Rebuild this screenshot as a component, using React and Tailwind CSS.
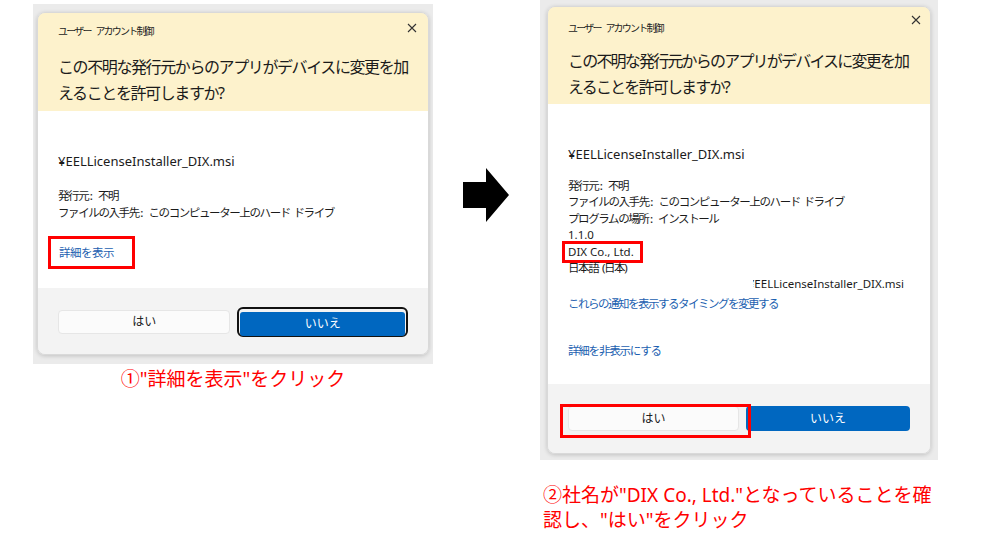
import React from "react";

const font = { fontFamily: '"Noto Sans", "Noto Sans CJK JP", sans-serif' };

const CloseIcon = () => (
  <svg width="10" height="10" viewBox="0 0 10 10" className="block">
    <path d="M1 1L9 9M9 1L1 9" stroke="#333" strokeWidth="1.1" />
  </svg>
);

// label: value line, colon kept at normal spacing so it doesn't collapse
const Kv = ({ k, v }) => (
  <div>
    <span className="mr-[1.5px]">{k}</span>
    <span className="tracking-normal font-medium">: </span>
    {v}
  </div>
);

const Header = ({ pad, titleMt, titleTrack, xPos }) => (
  <div className={`relative h-full bg-[#fdf2cc] px-[20px] ${pad}`}>
    <div className="text-[10px] leading-[12px] tracking-[-1.8px] [word-spacing:4px] text-[#222]">
      ユーザー アカウント制御
    </div>
    <div className={`absolute ${xPos}`}>
      <CloseIcon />
    </div>
    <div className={`${titleMt} ${titleTrack} text-[16px] leading-[26px] whitespace-nowrap text-[#1b1b1b]`}>
      この不明な発行元からのアプリがデバイスに変更を加
      <br />
      えることを許可しますか?
    </div>
  </div>
);

const App = () => {
  return (
    <div className="w-[1001px] h-[534px] bg-white flex items-start" style={font}>
      {/* Left - before */}
      <div className="ml-[33px] mt-[4px] w-[400px] flex flex-col items-center">
        <div className="w-full bg-[#ebebeb] pt-[8px] pb-[9px] px-[4px]">
          <div className="rounded-[8px] overflow-hidden shadow-[0_1px_4px_rgba(0,0,0,0.18)] border border-[#d9d9d9]">
            <div className="h-[98px] overflow-hidden">
              <Header pad="pt-[12px]" titleMt="mt-[17px]" titleTrack="tracking-[-1.4px]" xPos="right-[11px] top-[10px]" />
            </div>
            <div className="h-[177px] bg-white px-[20px] pt-[41px]">
              <div className="text-[13px] leading-[18px] text-[#1b1b1b]">
                ¥EELLicenseInstaller_DIX.msi
              </div>
              <div className="mt-[17px] text-[11.5px] leading-[17px] tracking-[-1.4px] [word-spacing:2px] text-[#1b1b1b]">
                <Kv k="発行元" v="不明" />
                <Kv k="ファイルの入手先" v="このコンピューター上のハード ドライブ" />
              </div>
              <div className="mt-[15px] -ml-[10px] w-[87px] h-[33px] border-[3px] border-[#ff0000] pl-[8px] flex items-center">
                <span className="text-[11.5px] tracking-[-0.5px] text-[#1c5fb0]">詳細を表示</span>
              </div>
            </div>
            <div className="h-[66px] bg-[#f3f3f3] px-[20px] pt-[19px] flex items-start gap-[7px]">
              <button className="mt-[3px] w-[173px] h-[24px] rounded-[4px] bg-[#fbfbfb] border border-[#e6e6e6] text-[12px] text-[#1b1b1b]">
                はい
              </button>
              <div className="w-[171px] h-[30px] rounded-[6px] border-2 border-[#111] p-[1px]">
                <button className="w-full h-full rounded-[3px] bg-[#0067c0] text-[12px] text-white">
                  いいえ
                </button>
              </div>
            </div>
          </div>
        </div>
        <p className="mt-[3px] text-[19px] leading-[24px] text-[#ff0000]">
          ①"詳細を表示"をクリック
        </p>
      </div>

      {/* Arrow */}
      <svg width="46" height="54" viewBox="0 0 46 54" className="ml-[30px] mt-[168px] shrink-0">
        <path d="M0 14H23V0L46 27L23 54V40H0Z" fill="#000" />
      </svg>

      {/* Right - after */}
      <div className="ml-[31px] w-[398px] flex flex-col">
        <div className="w-full bg-[#ebebeb] pt-[6px] pb-[6px] px-[7px]">
          <div className="rounded-[8px] overflow-hidden shadow-[0_1px_4px_rgba(0,0,0,0.18)] border border-[#d9d9d9]">
            <div className="h-[97px] overflow-hidden">
              <Header pad="pt-[15px]" titleMt="mt-[14px]" titleTrack="tracking-[-1.8px]" xPos="right-[9px] top-[8px]" />
            </div>
            <div className="h-[280px] bg-white px-[20px] pt-[41px]">
              <div className="text-[13px] leading-[18px] text-[#1b1b1b]">
                ¥EELLicenseInstaller_DIX.msi
              </div>
              <div className="mt-[15px] text-[11.5px] leading-[16.4px] tracking-[-1.4px] [word-spacing:2px] text-[#1b1b1b]">
                <Kv k="発行元" v="不明" />
                <Kv k="ファイルの入手先" v="このコンピューター上のハード ドライブ" />
                <Kv k="プログラムの場所" v="インストール" />
                <div className="tracking-normal [word-spacing:0px]">1.1.0</div>
                <div className="-ml-[6px] -my-[3px] w-[81px] border-[3px] border-[#ff0000] pl-[3px] tracking-normal [word-spacing:0px]">
                  DIX Co., Ltd.
                </div>
                <div>日本語 (日本)</div>
                <div className="ml-auto mr-[6px] w-[151px] flex justify-end overflow-hidden whitespace-nowrap tracking-normal [word-spacing:0px]">
                  <span>¥EELLicenseInstaller_DIX.msi</span>
                </div>
              </div>
              <div className="mt-[3px] text-[11.5px] leading-[16px] tracking-[-1.5px] text-[#1c5fb0]">
                これらの通知を表示するタイミングを変更する
              </div>
              <div className="mt-[31px] text-[11.5px] leading-[16px] tracking-[-1.2px] text-[#1c5fb0]">
                詳細を非表示にする
              </div>
            </div>
            <div className="relative h-[69px] bg-[#f3f3f3] px-[20px] pt-[22px] flex items-start gap-[7px]">
              <button className="w-[171px] h-[25px] rounded-[4px] bg-[#fbfbfb] border border-[#e6e6e6] text-[12px] text-[#1b1b1b]">
                はい
              </button>
              <button className="flex-1 h-[25px] rounded-[4px] bg-[#0067c0] text-[12px] text-white">
                いいえ
              </button>
              <div className="absolute left-[12px] top-[20px] w-[191px] h-[34px] border-[3px] border-[#ff0000]" />
            </div>
          </div>
        </div>
        <p className="mt-[23px] pl-[3px] text-[19px] leading-[25px] text-[#ff0000] whitespace-nowrap">
          ②社名が"DIX Co., Ltd."となっていることを確
          <br />
          認し、"はい"をクリック
        </p>
      </div>
    </div>
  );
};

export default App;
